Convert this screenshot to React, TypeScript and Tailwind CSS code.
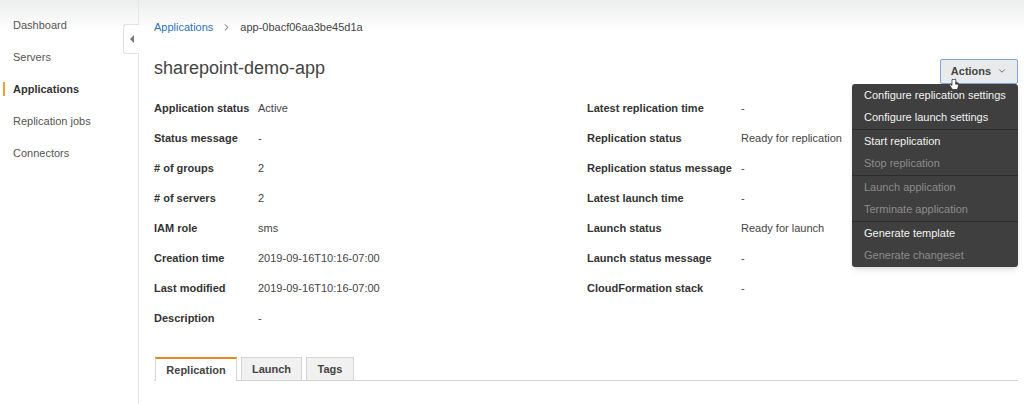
import { ChevronDown, ChevronRight } from 'lucide-react';

const nav = ['Dashboard', 'Servers', 'Applications', 'Replication jobs', 'Connectors'];

const leftRows: [string, string][] = [
  ['Application status', 'Active'],
  ['Status message', '-'],
  ['# of groups', '2'],
  ['# of servers', '2'],
  ['IAM role', 'sms'],
  ['Creation time', '2019-09-16T10:16-07:00'],
  ['Last modified', '2019-09-16T10:16-07:00'],
  ['Description', '-'],
];

const rightRows: [string, string][] = [
  ['Latest replication time', '-'],
  ['Replication status', 'Ready for replication'],
  ['Replication status message', '-'],
  ['Latest launch time', '-'],
  ['Launch status', 'Ready for launch'],
  ['Launch status message', '-'],
  ['CloudFormation stack', '-'],
];

const menu: { label: string; disabled?: boolean }[][] = [
  [{ label: 'Configure replication settings' }, { label: 'Configure launch settings' }],
  [{ label: 'Start replication' }, { label: 'Stop replication', disabled: true }],
  [{ label: 'Launch application', disabled: true }, { label: 'Terminate application', disabled: true }],
  [{ label: 'Generate template' }, { label: 'Generate changeset', disabled: true }],
];

function DetailColumn({ rows, labelWidth }: { rows: [string, string][]; labelWidth: string }) {
  return (
    <div className="flex flex-col">
      {rows.map(([k, v]) => (
        <div key={k} className="flex h-[30px] items-center">
          <span className={`${labelWidth} shrink-0 font-bold text-[#333]`}>{k}</span>
          <span className="text-[#444]">{v}</span>
        </div>
      ))}
    </div>
  );
}

function ActionsMenu() {
  return (
    <div className="absolute right-0 top-[25px] w-[166px] rounded-[3px] bg-[#3f3f3f] shadow-md">
      {menu.map((group, gi) => (
        <div key={gi} className={gi > 0 ? 'border-t border-[#2c2c2c]' : ''}>
          {group.map((it) => (
            <div
              key={it.label}
              className={`flex h-[22.5px] items-center px-[12px] whitespace-nowrap ${it.disabled ? 'text-[#8c8c8c]' : 'text-[#f2f2f2]'}`}
            >
              {it.label}
            </div>
          ))}
        </div>
      ))}
    </div>
  );
}

export default function App() {
  return (
    <div
      className="flex h-[404px] w-[1024px] overflow-hidden bg-[linear-gradient(to_bottom,#eceded,#ffffff_30px)] text-[11px] text-[#444]"
      style={{ fontFamily: '"Liberation Sans", Arial, sans-serif' }}
    >
      {/* sidebar */}
      <div className="relative w-[139px] shrink-0 border-r border-[#e6e6e6]">
        <div className="flex flex-col pt-[9px]">
          {nav.map((n) => (
            <div key={n} className="relative flex h-[32px] items-center pl-[13px]">
              {n === 'Applications' && <span className="absolute left-[3px] top-[9px] h-[14px] w-[2px] bg-[#f0a030]" />}
              <span className={n === 'Applications' ? 'font-bold text-[#333]' : 'text-[#555]'}>{n}</span>
            </div>
          ))}
        </div>
        <div className="absolute right-[-1px] top-[24px] flex h-[30px] w-[16px] items-center justify-center rounded-l-[3px] border border-r-0 border-[#e2e2e2] bg-white">
          <span className="h-0 w-0 border-y-[4px] border-r-[4px] border-y-transparent border-r-[#777]" />
        </div>
      </div>

      {/* main */}
      <div className="flex flex-1 flex-col pl-[15px] pr-[6px]">
        <div className="mt-[16px] flex h-[22px] items-center gap-[8px]">
          <span className="text-[#2e73b8]">Applications</span>
          <ChevronRight size={11} strokeWidth={2} className="text-[#555]" />
          <span className="text-[#444]">app-0bacf06aa3be45d1a</span>
        </div>

        <div className="mt-[18px] flex h-[24px] items-center justify-between">
          <span className="text-[18px] text-[#444]">sharepoint-demo-app</span>
          <div className="relative mt-[6px]">
            <div className="flex h-[25px] w-[78px] items-center justify-center gap-[6px] rounded-[2px] border border-[#7ea6dc] bg-[#e9eaeb] font-bold text-[#444]">
              <span>Actions</span>
              <ChevronDown size={10} strokeWidth={2} className="text-[#555]" />
            </div>
            <ActionsMenu />
            <svg className="absolute left-[9px] top-[19px]" width="11" height="13" viewBox="0 0 11 13">
              <path d="M3 1.5v6l-1.5-1.2c-.6-.4-1.3.3-.9.9L3.5 11.5h5l1-4V5.5c0-.6-.9-.6-.9 0V6.5V5c0-.6-.9-.6-.9 0v1.3V4.6c0-.6-.9-.6-.9 0v1.8V1.5c0-.7-.9-.7-.9 0z" fill="#fff" stroke="#222" strokeWidth="0.7" />
            </svg>
          </div>
        </div>

        <div className="mt-[13px] flex">
          <div className="w-[433px] shrink-0">
            <DetailColumn rows={leftRows} labelWidth="w-[104px]" />
          </div>
          <DetailColumn rows={rightRows} labelWidth="w-[154px]" />
        </div>

        <div className="mt-[24px] flex items-end gap-[4px] border-b border-[#d5d5d5] pl-[1px]">
          <div className="-mb-px flex h-[24px] w-[82px] items-center justify-center border-x border-[#d5d5d5] border-t-2 border-t-[#e7891f] bg-white font-bold text-[#444]">
            Replication
          </div>
          <div className="flex h-[23px] w-[61px] items-center justify-center border-x border-t border-[#d5d5d5] bg-[#f1f1f1] font-bold text-[#444]">
            Launch
          </div>
          <div className="flex h-[23px] w-[48px] items-center justify-center border-x border-t border-[#d5d5d5] bg-[#f1f1f1] font-bold text-[#444]">
            Tags
          </div>
        </div>
      </div>
    </div>
  );
}
